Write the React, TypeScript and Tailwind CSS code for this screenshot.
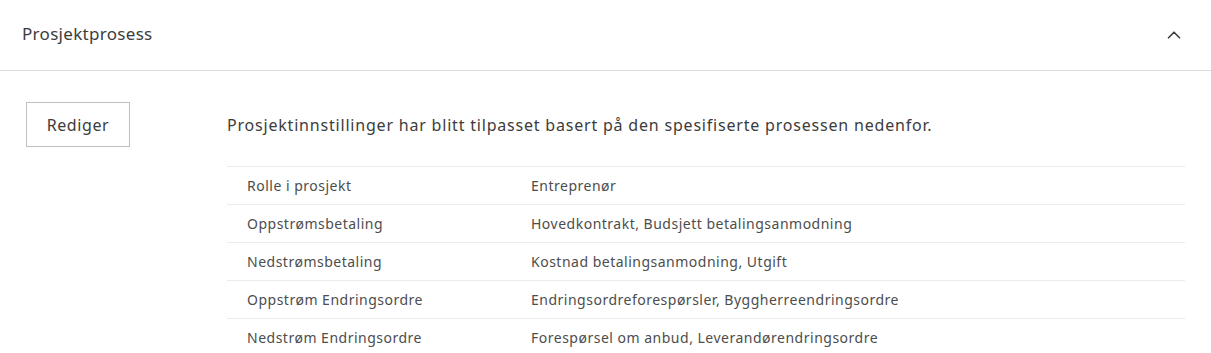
import { ChevronUp } from 'lucide-react';

const rows: [string, string][] = [
  ['Rolle i prosjekt', 'Entreprenør'],
  ['Oppstrømsbetaling', 'Hovedkontrakt, Budsjett betalingsanmodning'],
  ['Nedstrømsbetaling', 'Kostnad betalingsanmodning, Utgift'],
  ['Oppstrøm Endringsordre', 'Endringsordreforespørsler, Byggherreendringsordre'],
  ['Nedstrøm Endringsordre', 'Forespørsel om anbud, Leverandørendringsordre'],
];

export default function App() {
  return (
    <div className="min-h-screen bg-white text-[#3c3c3c]" style={{ fontFamily: '"Noto Sans", "Open Sans", sans-serif' }}>
      <div className="flex items-center justify-between h-[71px] pl-[22px] pr-[26px] border-b border-[#dcdcdc]">
        <h2 className="text-[17px] font-normal tracking-[0.3px] -mt-[3px]">Prosjektprosess</h2>
        <ChevronUp className="w-[22px] h-[22px] text-[#3c3c3c]" strokeWidth={1.8} />
      </div>

      <div className="flex pt-[31px] pl-[26px] pr-[26px]">
        <div className="w-[201px] shrink-0">
          <button className="w-[104px] h-[45px] border border-[#bfbfbf] text-[16px] tracking-[0.6px] text-[#3c3c3c] bg-white">
            Rediger
          </button>
        </div>
        <div className="flex-1">
          <p className="text-[16px] leading-[24px] mt-[11px] tracking-[0.8px] text-[#3c3c3c]">
            Prosjektinnstillinger har blitt tilpasset basert på den spesifiserte prosessen nedenfor.
          </p>
          <table className="w-full mt-[29px] text-[14px] tracking-[0.5px] text-[#4d4d4d] border-collapse">
            <tbody>
              {rows.map(([k, v]) => (
                <tr key={k} className="border-t border-b border-[#ebebeb] h-[38px]">
                  <td className="pl-[20px] w-[304px]">{k}</td>
                  <td>{v}</td>
                </tr>
              ))}
            </tbody>
          </table>
        </div>
      </div>
    </div>
  );
}
